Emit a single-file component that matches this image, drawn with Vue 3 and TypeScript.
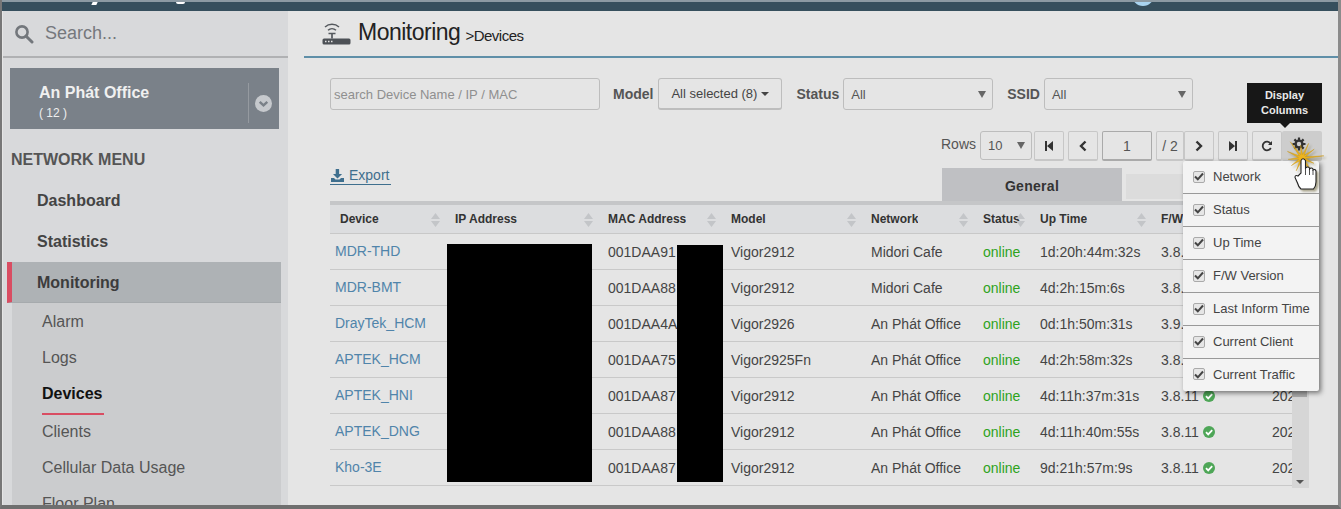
<script setup lang="ts">
interface Row { device: string; mac: string; model: string; network: string; up: string; fw: string; ok: boolean }
const rows: Row[] = [
  { device: 'MDR-THD', mac: '001DAA91', model: 'Vigor2912', network: 'Midori Cafe', up: '1d:20h:44m:32s', fw: '3.8.11', ok: true },
  { device: 'MDR-BMT', mac: '001DAA88', model: 'Vigor2912', network: 'Midori Cafe', up: '4d:2h:15m:6s', fw: '3.8.11', ok: true },
  { device: 'DrayTek_HCM', mac: '001DAA4A', model: 'Vigor2926', network: 'An Phát Office', up: '0d:1h:50m:31s', fw: '3.9.1', ok: true },
  { device: 'APTEK_HCM', mac: '001DAA75', model: 'Vigor2925Fn', network: 'An Phát Office', up: '4d:2h:58m:32s', fw: '3.8.11', ok: true },
  { device: 'APTEK_HNI', mac: '001DAA87', model: 'Vigor2912', network: 'An Phát Office', up: '4d:11h:37m:31s', fw: '3.8.11', ok: true },
  { device: 'APTEK_DNG', mac: '001DAA88', model: 'Vigor2912', network: 'An Phát Office', up: '4d:11h:40m:55s', fw: '3.8.11', ok: true },
  { device: 'Kho-3E', mac: '001DAA87', model: 'Vigor2912', network: 'An Phát Office', up: '9d:21h:57m:9s', fw: '3.8.11', ok: true },
]
const headers = ['Device', 'IP Address', 'MAC Address', 'Model', 'Network', 'Status', 'Up Time', 'F/W Version', 'Last']
const columns = ['Network', 'Status', 'Up Time', 'F/W Version', 'Last Inform Time', 'Current Client', 'Current Traffic']
const topMenu = ['Dashboard', 'Statistics']
const subMenu = ['Alarm', 'Logs', 'Devices', 'Clients', 'Cellular Data Usage', 'Floor Plan']

// Spark behind the hand cursor: alternating long rays and a tight inner ring.
const rays = [22, 13, 16, 15, 14, 13, 14, 16, 20, 13, 16, 15]
const spark = rays
  .flatMap((r, i) => {
    const a = (i * Math.PI) / 6 - 0.1
    const b = a + Math.PI / 12
    return [
      `${(22 + r * Math.cos(a)).toFixed(1)},${(18 + r * Math.sin(a)).toFixed(1)}`,
      `${(22 + 3.5 * Math.cos(b)).toFixed(1)},${(18 + 3.5 * Math.sin(b)).toFixed(1)}`,
    ]
  })
  .join(' ')
</script>

<template>
  <div class="frame">
    <header class="topbar">
      <i class="frag f1"></i>
      <i class="frag f2"></i>
      <i class="avatar"></i>
    </header>
    <div class="body">
      <aside class="side">
        <div class="search">
          <svg class="search-ico" width="20" height="20" viewBox="0 0 20 20"><circle cx="8" cy="8" r="5.6" fill="none" stroke="#73777c" stroke-width="2.6"/><path d="M12.2 12.2 18 18" stroke="#73777c" stroke-width="3" stroke-linecap="round"/></svg>
          <span>Search...</span>
        </div>
        <div class="office">
          <div class="office-text"><b>An Phát Office</b><small>( 12 )</small></div>
          <i class="office-sep"></i>
          <svg class="office-chev" width="17" height="17" viewBox="0 0 18 18"><circle cx="9" cy="9" r="9" fill="#c6c9cd"/><path d="M5 7.2 9 11l4-3.8" fill="none" stroke="#7a8188" stroke-width="2.6"/></svg>
        </div>
        <div class="menu-title">NETWORK MENU</div>
        <div v-for="m in topMenu" :key="m" class="menu-item">{{ m }}</div>
        <div class="menu-item active">Monitoring</div>
        <div class="sub">
          <div v-for="s in subMenu" :key="s" class="sub-item" :class="{ current: s === 'Devices' }"><span>{{ s }}</span></div>
        </div>
      </aside>

      <main class="main">
        <div class="title">
          <svg width="29" height="23" viewBox="0 0 29 23">
            <path d="M3 5a10.500 10.500 0 0 1 14 0M6 8.200a6 6 0 0 1 8 0" fill="none" stroke="#55595e" stroke-width="1.500"/>
            <path d="M6.500 11.500h7M10 11.500v5" stroke="#55595e" stroke-width="1.700"/>
            <rect x="0.500" y="16.500" width="28" height="6" rx="1.500" fill="#4d5156"/>
            <path d="M3 19.500h1.500M6 19.500h1.500M9 19.500h1.500" stroke="#e4e4e4" stroke-width="1.600"/>
          </svg>
          <h1>Monitoring</h1>
          <span class="crumb">&gt;Devices</span>
        </div>

        <div class="filters">
          <div class="input device-search">search Device Name / IP / MAC</div>
          <label class="model-l">Model</label>
          <div class="input model">All selected (8) <i class="caret"></i></div>
          <label class="status-l">Status</label>
          <div class="input select status">All<i class="arrow"></i></div>
          <label class="ssid-l">SSID</label>
          <div class="input select ssid">All<i class="arrow"></i></div>
        </div>

        <div class="pager">
          <span class="rows-l">Rows</span>
          <div class="input select rows">10<i class="arrow"></i></div>
          <button class="pg first">
            <svg width="10" height="10" viewBox="0 0 10 10"><path d="M1 0h2v10H1zM9 0v10L3 5z" fill="#333"/></svg>
          </button>
          <button class="pg">
            <svg width="10" height="12" viewBox="0 0 10 12"><path d="M7.500 1.500 3 6l4.500 4.500" fill="none" stroke="#333" stroke-width="2.400"/></svg>
          </button>
          <div class="pg page">1</div>
          <div class="pg total">/ 2</div>
          <button class="pg next">
            <svg width="10" height="12" viewBox="0 0 10 12"><path d="M2.500 1.500 7 6l-4.500 4.500" fill="none" stroke="#333" stroke-width="2.400"/></svg>
          </button>
          <button class="pg">
            <svg width="10" height="10" viewBox="0 0 10 10"><path d="M7 0h2v10H7zM1 0v10l6-5z" fill="#333"/></svg>
          </button>
          <button class="pg">
            <svg width="12" height="12" viewBox="0 0 12 12"><path d="M9.800 8a4.300 4.300 0 1 1-.3-4.500" fill="none" stroke="#333" stroke-width="1.800"/><path d="M11 1v4H7z" fill="#333"/></svg>
          </button>
          <button class="pg gear">
            <svg width="14" height="14" viewBox="0 0 14 14"><circle cx="7" cy="7" r="3.400" fill="none" stroke="#333" stroke-width="2.400"/><path d="M7 .5v3M7 10.500v3M.5 7h3M10.500 7h3M2.400 2.400l2 2M9.600 9.600l2 2M11.600 2.400l-2 2M4.400 9.600l-2 2" stroke="#333" stroke-width="2.200"/></svg>
          </button>
        </div>

        <div class="toolbar">
          <a class="export">
            <svg width="13" height="13" viewBox="0 0 13 13"><path d="M4.700 0h3.400v5h3L6.500 9.500 2 5h2.700zM0 9h3l1.500 1.500h4L10 9h3v4H0z" fill="#3f6f8e"/></svg>
            Export
          </a>
          <div class="tabs">
            <div class="tab on">General</div>
            <div class="tab off"></div>
          </div>
        </div>

        <div class="table-wrap">
          <div class="grid head">
            <div v-for="h in headers" :key="h" class="cell">
              <span class="clip">{{ h }}</span>
              <svg class="sort" width="9" height="16" viewBox="0 0 9 16"><path d="M4.500 1 9 7H0zM4.500 15 0 9h9z" fill="#c3c5c8"/></svg>
            </div>
          </div>
          <div v-for="r in rows" :key="r.device" class="grid row">
            <div class="cell link">{{ r.device }}</div>
            <div class="cell"></div>
            <div class="cell">{{ r.mac }}</div>
            <div class="cell">{{ r.model }}</div>
            <div class="cell">{{ r.network }}</div>
            <div class="cell online">online</div>
            <div class="cell">{{ r.up }}</div>
            <div class="cell fw">
              {{ r.fw }}
              <svg width="12" height="12" viewBox="0 0 12 12"><circle cx="6" cy="6" r="6" fill="#4ea657"/><path d="m3 6.200 2.200 2.200L9.200 4.200" fill="none" stroke="#fff" stroke-width="1.800"/></svg>
            </div>
            <div class="cell"><span class="clip">202</span></div>
          </div>
          <div class="scroll">
            <div class="thumb"></div>
            <i></i>
          </div>
          <div class="mask m1"></div>
          <div class="mask m2"></div>
        </div>

        <div class="tip">Display<br />Columns</div>
        <div class="dropdown">
          <div v-for="c in columns" :key="c" class="opt">
            <span class="check">
              <svg width="10" height="9" viewBox="0 0 10 9"><path d="m1 4.500 2.800 2.800L9 1.500" fill="none" stroke="#444" stroke-width="2"/></svg>
            </span>
            {{ c }}
          </div>
        </div>
        <svg class="cursor" width="46" height="54" viewBox="0 0 46 54">
          <polygon :points="spark" fill="#edb41f" stroke="#c4920f" stroke-width=".4"/>
          <path d="M21 33V20.500q2-3.500 4.500 0V28q2.500-2 4 0v1q2-2 3.500 0v1q2-1.500 3 1v11q0 4-2.500 7H21q-2.500-2-3.500-6L15 37.500q0-3 3-1.500z" fill="#fff" stroke="#222" stroke-width="1.100"/>
          <path d="M25.500 28v7M29.500 29v6M33 30v5" stroke="#222" stroke-width=".8"/>
        </svg>
      </main>
    </div>
  </div>
</template>

<style>
html, body { margin: 0; }
</style>

<style scoped>
.frame {
  width: 1341px; height: 509px; box-sizing: border-box; position: relative; overflow: hidden;
  border-left: 2px solid #777; border-right: 3px solid #8b8b8b; border-bottom: 4px solid #6f6f6f;
  background: #e5e5e5; font-family: "Liberation Sans", Arial, sans-serif; color: #333; font-size: 14px;
}
.topbar { height: 11px; margin-left: -2px; margin-right: -3px; background: #364f5d; border-top: 2px solid #8c9aa3; box-sizing: border-box; position: relative; overflow: hidden; }
.frag { position: absolute; background: #fff; }
.f1 { left: 92px; top: 0; width: 5px; height: 3px; transform: skewX(-25deg); }
.f2 { left: 176px; top: 0; width: 9px; height: 2px; border-radius: 0 0 5px 5px; }
.avatar { position: absolute; left: 1132px; top: -9px; width: 22px; height: 13px; border-radius: 0 0 11px 11px; background: #a9d4f0; }
.body { display: flex; height: 494px; }
.side { width: 285px; flex: none; margin-left: 1px; background: #d8d9db; overflow: hidden; }
.search { height: 47px; box-sizing: border-box; padding: 0 0 0 11px; display: flex; align-items: center; gap: 11px; font-size: 18px; color: #75787d; border-bottom: 2px solid #b0b1b3; }
.office { margin: 10px 9px 0 7px; height: 61px; background: #7a8189; display: flex; align-items: center; color: #eee; padding: 0 7px 0 29px; }
.office-text { flex: 1; display: flex; flex-direction: column; gap: 3px; padding-top: 5px; }
.office-text b { font-size: 16px; line-height: 20px; color: #f0f0f0; }
.office-text small { font-size: 12px; line-height: 14px; }
.office-sep { width: 1px; height: 40px; background: #959aa0; margin: 8px 6px 0 0; }
.office-chev { margin-top: 9px; }
.menu-title { margin: 22px 0 0 8px; font-size: 16px; font-weight: bold; line-height: 18px; color: #555; }
.menu-item { height: 41px; margin: 0 7px 0 4px; padding-left: 30px; line-height: 41px; font-size: 16px; font-weight: bold; color: #444; box-sizing: border-box; }
.menu-title + .menu-item { margin-top: 11px; }
.menu-item.active { background: #aeb2b5; border-left: 5px solid #d94d62; padding-left: 25px; color: #3c3c3c; border-bottom: 1px solid #a6aaad; }
.sub { margin: 0 7px 0 9px; background: #cbccce; padding-top: 1px; }
.sub-item { height: 36px; padding-left: 30px; font-size: 16px; color: #555; line-height: 36px; }
.sub-item.current { height: 38px; }
.sub-item.current span { display: inline-block; height: 39px; box-sizing: border-box; border-bottom: 2px solid #d94d62; font-weight: bold; color: #111; padding-right: 1px; }

.main { flex: 1; position: relative; min-width: 0; }
.title { height: 47px; margin-left: 16px; box-sizing: border-box; border-bottom: 2px solid #5f8fa8; display: flex; align-items: center; padding: 0 0 0 18px; color: #222; }
.title svg { margin: 0 7px 0 0; }
.title h1 { margin: -2px 0 0; font-size: 23px; font-weight: normal; letter-spacing: -.5px; }
.crumb { font-size: 15px; letter-spacing: -.5px; margin: 4px 0 0 5px; }

.filters { display: flex; align-items: center; height: 32px; margin: 20px 0 0 42px; }
.input { box-sizing: border-box; height: 32px; border: 1px solid #bdbdbd; border-radius: 3px; display: flex; align-items: center; font-size: 13px; color: #555; position: relative; }
.device-search { width: 270px; padding-left: 3px; color: #8f8f8f; }
.filters label { font-weight: bold; font-size: 14px; color: #555; }
.model-l { margin-left: 13px; }
.model { width: 124px; margin-left: 5px; justify-content: center; gap: 4px; color: #444; border-bottom-width: 2px; }
.caret { border: 4px solid transparent; border-top-color: #444; border-bottom: 0; }
.status-l { margin-left: 14px; }
.select { padding-left: 7px; }
.status { width: 150px; margin-left: 4px; }
.ssid-l { margin-left: 14px; }
.ssid { width: 149px; margin-left: 4px; }
.arrow { position: absolute; right: 6px; top: 12px; border: 4px solid transparent; border-top: 7px solid #666; border-bottom: 0; }

.pager { position: absolute; top: 120px; right: 16px; display: flex; align-items: flex-start; height: 30px; }
.rows-l { font-size: 14px; color: #555; margin: 5px 4px 0 0; }
.rows { width: 52px; height: 29px; }
.rows .arrow { top: 10px; }
.pg { box-sizing: border-box; width: 30px; height: 30px; padding: 0; margin: 0 0 0 4px; background: transparent; border: 1px solid #c7c7c7; border-bottom-width: 2px; border-radius: 2px; display: flex; align-items: center; justify-content: center; font: 14px "Liberation Sans", Arial, sans-serif; color: #555; }
.first { margin-left: 2px; }
.page { width: 50px; border-color: #aaa; }
.total { width: 28px; }
.next { margin-left: 0; }
.gear { margin-left: 0; width: 40px; background: #cdcdcd; border: 0; padding: 0 6px 4px 0; }

.toolbar { position: absolute; left: 42px; right: 0; top: 155px; height: 36px; }
.export { position: absolute; left: 0; top: 0; color: #3f6f8e; font-size: 14px; border-bottom: 1px solid #3f6f8e; height: 19px; display: flex; align-items: center; gap: 5px; padding: 0 1px 0 1px; box-sizing: border-box; width: 61px; }
.tabs { position: absolute; left: 612px; top: 2px; display: flex; gap: 4px; }
.tab { height: 33px; }
.tab.on { width: 180px; background: #bfc0c3; text-align: center; line-height: 36px; font-weight: bold; color: #333; font-size: 14px; letter-spacing: .3px; }
.tab.off { width: 130px; height: 25px; margin-top: 6px; background: #dcdcdc; }

.table-wrap { position: absolute; left: 42px; top: 190px; width: 962px; }
.grid { display: grid; grid-template-columns: 115px 153px 123px 140px 112px 57px 121px 111px 30px; width: 962px; }
.cell { box-sizing: border-box; padding-left: 10px; position: relative; display: flex; align-items: center; overflow: hidden; white-space: nowrap; }
.head { height: 33px; background: #dcdddf; border-top: 4px solid #c5c6c8; border-bottom: 1px solid #c8c8c8; box-sizing: border-box; font-size: 12px; font-weight: bold; color: #333; padding-bottom: 1px; }
.clip { overflow: hidden; display: block; }
.sort { position: absolute; right: 5px; top: 7px; }
.row { height: 36px; border-bottom: 1px solid #c9c9c9; box-sizing: border-box; font-size: 14px; color: #444; }
.link { color: #5084aa; padding: 0 0 2px 5px; }
.online { color: #2ea31c; padding-left: 10px; }
.fw { gap: 4px; }
.scroll { position: absolute; right: -17px; top: 0; width: 17px; height: 287px; background: #d6d6d6; }
.thumb { position: absolute; left: 0; top: 189px; width: 15px; height: 7px; background: #a9a9a9; }
.scroll i { position: absolute; left: 4px; bottom: 4px; border: 4px solid transparent; border-top: 4px solid #555; border-bottom: 0; }
.mask { position: absolute; background: #000; }
.m1 { left: 117px; top: 43px; width: 145px; height: 238px; }
.m2 { left: 347px; top: 44px; width: 46px; height: 237px; }

.tip { position: absolute; left: 959px; top: 72px; width: 75px; height: 40px; background: #171717; color: #e9e9e9; font-size: 11px; font-weight: bold; text-align: center; line-height: 14.500px; padding-top: 5px; box-sizing: border-box; }
.tip::after { content: ""; position: absolute; left: 33px; bottom: -5px; border: 5px solid transparent; border-top-color: #171717; border-bottom: 0; }
.dropdown { position: absolute; left: 895px; top: 150px; width: 136px; background: #f3f3f3; box-shadow: 2px 2px 5px rgba(0, 0, 0, .5); border-radius: 2px; z-index: 2; }
.opt { height: 33px; box-sizing: border-box; border-bottom: 1px solid #999; display: flex; align-items: center; padding-left: 10px; gap: 8px; font-size: 13px; color: #444; padding-bottom: 1px; }
.opt:last-child { border-bottom: 0; height: 32px; padding-bottom: 2px; }
.check { width: 12px; height: 12px; box-sizing: border-box; border: 1px solid #aaa; border-radius: 2px; background: #e6e6e6; display: flex; align-items: center; justify-content: center; }
.cursor { position: absolute; left: 992px; top: 129px; z-index: 3; filter: drop-shadow(2px 2px 1px rgba(90, 80, 30, .5)); }
</style>
